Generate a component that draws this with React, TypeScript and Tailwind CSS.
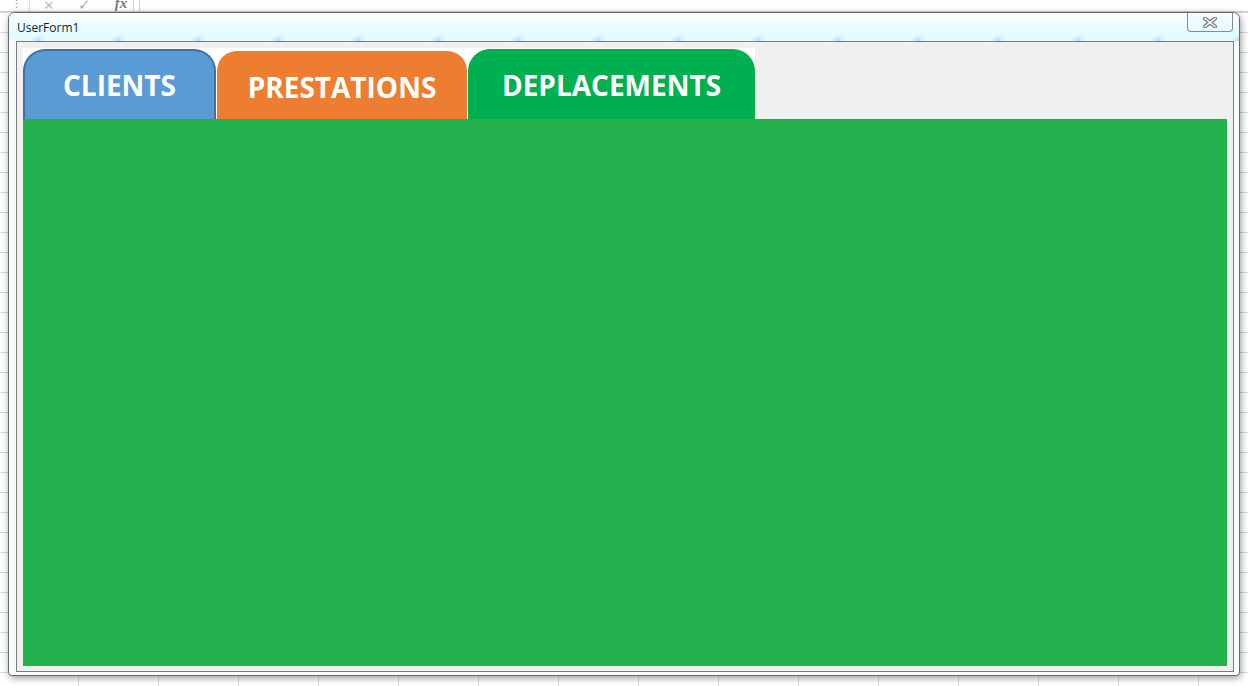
import React from "react";

function CloseGlyph() {
  return (
    <svg width="14" height="11" viewBox="0 0 14 11">
      <path d="M2 1.5 L12 9.5 M12 1.5 L2 9.5" stroke="#7d7d7d" strokeWidth="4" strokeLinecap="square" />
      <path d="M2 1.5 L12 9.5 M12 1.5 L2 9.5" stroke="#ffffff" strokeWidth="1.6" strokeLinecap="square" />
    </svg>
  );
}

export default function App() {
  return (
    <div className="w-[1248px] h-[686px] overflow-hidden bg-white flex flex-col font-['Open_Sans',sans-serif]">
      {/* Excel formula bar strip (mostly hidden behind the window) */}
      <div className="h-[12px] shrink-0 flex items-end border-b border-[#cfcfcf] bg-white overflow-hidden">
        <div className="flex items-end h-full">
          <span className="ml-[11px] w-[4px] text-[11px] leading-none text-[#8a8a8a] mb-[2px]">⋮</span>
          <div className="ml-[14px] w-px h-full bg-[#dcdcdc]" />
          <span className="ml-[14px] text-[17px] leading-none text-[#b4b4b4] mb-[-2px]">×</span>
          <span className="ml-[24px] text-[15px] leading-none text-[#b4b4b4] mb-[-1px]">✓</span>
          <span className="ml-[24px] text-[15px] leading-none italic font-bold text-[#7a7a7a] font-['Liberation_Serif',serif]">fx</span>
          <div className="ml-[6px] w-px h-full bg-[#d4d4d4]" />
          <div className="ml-[5px] w-px h-full bg-[#d4d4d4]" />
        </div>
      </div>

      {/* Sheet with grid */}
      <div className="flex-1 pl-[8px] bg-white bg-[linear-gradient(to_right,#dadada_1px,transparent_1px),linear-gradient(to_bottom,#dadada_1px,transparent_1px)] bg-[length:80px_20px] bg-[position:78px_0px]">
        {/* Window */}
        <div className="w-[1232px] h-[664px] flex flex-col border border-[#6a6a6a] rounded-t-[7px] rounded-b-[4px] bg-[#f7fdfe] shadow-[1px_2px_7px_rgba(0,0,0,0.4)]">
          {/* Title bar */}
          <div className="relative h-[28px] shrink-0 flex items-start rounded-t-[6px] bg-gradient-to-b from-[#ffffff] via-[#e6fdff] to-[#e2fcff]">
            <div className="absolute left-0 right-0 bottom-0 h-[8px] bg-[radial-gradient(circle_at_center,rgba(140,170,230,0.4)_0px,rgba(140,170,230,0.12)_4px,transparent_8px)] bg-[length:80px_8px] bg-[position:-11px_3px] bg-repeat-x" />
            <span className="relative pl-[8px] pt-[8px] text-[12px] leading-[14px] text-[#1a1a1a] font-['Open_Sans',sans-serif]">
              UserForm1
            </span>
            <div className="relative ml-auto mr-[6px] w-[46px] h-[19px] border border-t-0 border-[#8a8a8a] rounded-b-[4px] bg-gradient-to-b from-[#f4fdff] to-[#e4fbff] flex items-center justify-center">
              <CloseGlyph />
            </div>
          </div>

          {/* Client area */}
          <div className="flex-1 ml-[7px] mr-[5px] mb-[3px] border border-[#7b7b7b] bg-[#f0f0f0] pt-[6px] px-[6px] pb-[5px] flex flex-col">
            {/* Tab strip */}
            <div className="h-[71px] shrink-0 flex">
              <div className="w-[732px] h-full bg-white flex items-end font-['Open_Sans',sans-serif] font-bold text-white text-[28px] leading-[28px]">
                <div className="w-[193px] h-[70px] bg-[#5b9bd5] border-2 border-b-0 border-[#41719c] rounded-t-[22px] flex justify-center pt-[20px]">
                  CLIENTS
                </div>
                <div className="ml-px w-[250px] h-[68px] bg-[#ed7d31] rounded-t-[20px] flex justify-center pt-[22px]">
                  PRESTATIONS
                </div>
                <div className="ml-px w-[287px] h-[70px] bg-[#00b050] rounded-t-[22px] flex justify-center pt-[22px]">
                  DEPLACEMENTS
                </div>
              </div>
            </div>
            {/* Panel */}
            <div className="flex-1 bg-[#22b14c]" />
          </div>
        </div>
      </div>
    </div>
  );
}
